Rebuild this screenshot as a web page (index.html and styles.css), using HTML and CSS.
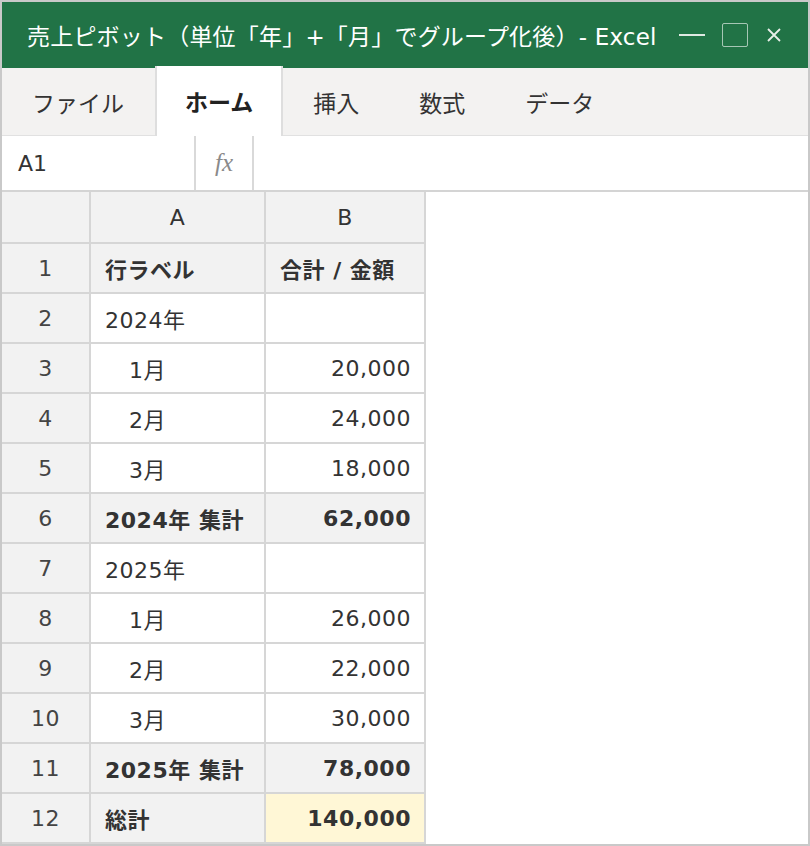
FILE: index.html
```html
<!DOCTYPE html>
<html>
<head>
    <title>売上ピボット - Excel</title>
    <link rel="stylesheet" href="styles.css">
</head>
<body>
    <div class="window">
        <div class="titlebar">
            <div class="title">売上ピボット（単位「年」+「月」でグループ化後）- Excel</div>
            <div class="controls">
                <span class="minimize"></span>
                <span class="maximize"></span>
                <svg class="close" width="14" height="14" viewBox="0 0 14 14">
                    <path d="M1 1 L13 13 M13 1 L1 13" stroke="#e8efe9" stroke-width="1.8" fill="none"/>
                </svg>
            </div>
        </div>
        <div class="tabs">
            <div class="tab">ファイル</div>
            <div class="tab active">ホーム</div>
            <div class="tab">挿入</div>
            <div class="tab">数式</div>
            <div class="tab">データ</div>
        </div>
        <div class="formula-bar">
            <div class="name-box">A1</div>
            <div class="fx">fx</div>
            <div class="formula-input"></div>
        </div>
        <div class="sheet">
            <div class="grid">
                <div class="hd"></div><div class="hd center">A</div><div class="hd center">B</div>

                <div class="rh">1</div><div class="cell gray bold">行ラベル</div><div class="cell gray bold">合計 / 金額</div>
                <div class="rh">2</div><div class="cell">2024年</div><div class="cell"></div>
                <div class="rh">3</div><div class="cell indent">1月</div><div class="cell num">20,000</div>
                <div class="rh">4</div><div class="cell indent">2月</div><div class="cell num">24,000</div>
                <div class="rh">5</div><div class="cell indent">3月</div><div class="cell num">18,000</div>
                <div class="rh">6</div><div class="cell gray bold">2024年 集計</div><div class="cell gray bold num">62,000</div>
                <div class="rh">7</div><div class="cell">2025年</div><div class="cell"></div>
                <div class="rh">8</div><div class="cell indent">1月</div><div class="cell num">26,000</div>
                <div class="rh">9</div><div class="cell indent">2月</div><div class="cell num">22,000</div>
                <div class="rh">10</div><div class="cell indent">3月</div><div class="cell num">30,000</div>
                <div class="rh">11</div><div class="cell gray bold">2025年 集計</div><div class="cell gray bold num">78,000</div>
                <div class="rh">12</div><div class="cell gray bold">総計</div><div class="cell grand bold num">140,000</div>
            </div>
        </div>
    </div>
</body>
</html>
```

FILE: styles.css
```css
html, body {
    margin: 0;
    padding: 0;
}
body {
    font-family: "DejaVu Sans", "Noto Sans CJK JP", sans-serif;
    color: #333;
    background-color: white;
}
.window {
    width: 810px;
    height: 846px;
    box-sizing: border-box;
    border: 2px solid #c9c9c9;
    display: flex;
    flex-direction: column;
    overflow: hidden;
}
.titlebar {
    height: 66px;
    flex: none;
    background-color: #217346;
    display: flex;
    align-items: center;
    padding: 0 27px 0 25px;
}
.title {
    flex: 1;
    min-width: 0;
    color: white;
    font-size: 23px;
    letter-spacing: 0.2px;
    white-space: nowrap;
    overflow: hidden;
}
.controls {
    display: flex;
    align-items: center;
    flex: none;
}
.minimize {
    width: 26px;
    height: 2px;
    background-color: #dfe9e2;
    margin-right: 17px;
}
.maximize {
    width: 24px;
    height: 22px;
    border: 1px solid rgba(255,255,255,0.6);
    border-radius: 2px;
    margin-right: 19px;
}
.close {
    display: block;
}
.tabs {
    height: 67px;
    flex: none;
    background-color: #f3f2f1;
    display: flex;
}
.tab {
    padding: 0 28px;
    font-size: 23px;
    color: #333;
    display: flex;
    align-items: center;
    border-left: 2px solid transparent;
    border-right: 2px solid transparent;
}
.tab:first-child {
    border-left: none;
    padding-left: 30px;
    padding-right: 29px;
}
.tab.active {
    background-color: white;
    border-color: #dedede;
    font-weight: bold;
    color: #222;
    margin-top: -2px;
    margin-bottom: -1px;
    position: relative;
    z-index: 1;
}
.formula-bar {
    height: 54px;
    flex: none;
    border-top: 1px solid #e1e1e1;
    border-bottom: 2px solid #d4d4d4;
    background-color: white;
    display: flex;
}
.name-box {
    width: 194px;
    box-sizing: border-box;
    padding-left: 16px;
    border-right: 2px solid #d9d9d9;
    font-size: 22px;
    display: flex;
    align-items: center;
    color: #333;
}
.fx {
    width: 58px;
    box-sizing: border-box;
    border-right: 2px solid #d9d9d9;
    display: flex;
    align-items: center;
    justify-content: center;
    font-family: "Liberation Serif", "DejaVu Serif", serif;
    font-style: italic;
    font-size: 25px;
    color: #8a8a8a;
}
.formula-input {
    flex: 1;
}
.sheet {
    flex: 1;
    background-color: white;
}
.grid {
    display: inline-grid;
    grid-template-columns: 87px 173px 158px;
    grid-template-rows: 50px;
    grid-auto-rows: 48px;
    gap: 2px;
    padding: 0 2px 2px 0;
    background-color: #d6d6d6;
    font-size: 22px;
    letter-spacing: 0.5px;
}
.grid > div {
    display: flex;
    align-items: center;
}
.hd {
    background-color: #f2f2f2;
    color: #333;
}
.center {
    justify-content: center;
}
.rh {
    background-color: #f2f2f2;
    justify-content: center;
    color: #444;
}
.cell {
    background-color: white;
    padding: 0 13px 0 14px;
    white-space: nowrap;
}
.cell.gray {
    background-color: #f2f2f2;
}
.cell.grand {
    background-color: #fff7d6;
}
.cell.indent {
    padding-left: 38px;
}
.cell.num {
    justify-content: flex-end;
}
.bold {
    font-weight: bold;
}
```
